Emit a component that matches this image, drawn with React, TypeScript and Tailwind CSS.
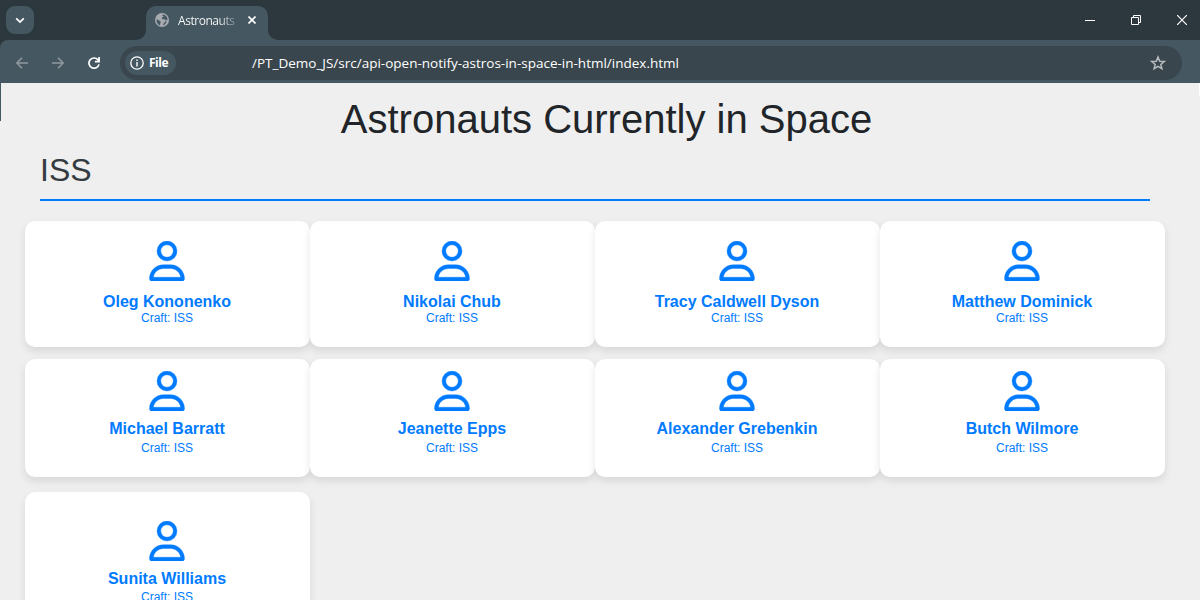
import { FaRegUser } from "react-icons/fa6";

const rows = [
  {
    names: ["Oleg Kononenko", "Nikolai Chub", "Tracy Caldwell Dyson", "Matthew Dominick"],
    row: "h-[126px]",
    card: "pt-5",
    name: "mt-[11px]",
    craft: "",
  },
  {
    names: ["Michael Barratt", "Jeanette Epps", "Alexander Grebenkin", "Butch Wilmore"],
    row: "mt-3 h-[118px]",
    card: "pt-3",
    name: "mt-[8px]",
    craft: "mt-[3px]",
  },
  {
    names: ["Sunita Williams"],
    row: "mt-[15px] h-[126px]",
    card: "pt-[29px]",
    name: "mt-[8px]",
    craft: "mt-[2px]",
  },
];

function TitleBar() {
  return (
    <div className="flex h-10 shrink-0 items-start bg-[#2d383e] text-white">
      <div className="ml-1.5 mt-1.5 flex h-7 w-7 items-center justify-center rounded-[9px] bg-[#455760]">
        <svg width="10" height="7" viewBox="0 0 10 7" fill="none" stroke="#fff" strokeWidth="1.8">
          <path d="M1.2 1.4 5 5.1 8.8 1.4" />
        </svg>
      </div>
      <div className="ml-[102px] mt-1.5 flex">
        <svg className="self-end" width="10" height="10" viewBox="0 0 10 10" fill="#455760">
          <path d="M10 0v10H0A10 10 0 0 0 10 0Z" />
        </svg>
        <div className="flex h-[34px] w-[122px] items-start rounded-t-[10px] bg-[#455760] pl-[9px] pt-[7px]">
          <svg width="14" height="14" viewBox="0 0 14 14">
            <circle cx="7" cy="7" r="7" fill="#a5abaf" />
            <path
              d="M1.6 6.1 5 8.1q1.5 1 .4 1.9l-.6 2.4C2.8 11.6 1.3 9.6 1.6 6.1ZM7.6 1.6c2.9.2 4.8 2.2 4.9 5.1l-1.5.8-1.4-1.2H7.5l-.9-1.1 1.1-1.1L9 3.4 7.2 2.6ZM8.3 12.3l.2-1.7 1.2-.9.1-1.2 1.8-.3c-.4 2-1.6 3.5-3.3 4.1Z"
              fill="#455760"
            />
          </svg>
          <div className="ml-[9px] w-[57px] whitespace-nowrap bg-gradient-to-r from-white from-70% to-white/30 bg-clip-text font-['Open_Sans','Noto_Sans',sans-serif] text-[12px] leading-[16px] tracking-[-0.45px] text-transparent">
            Astronauts
          </div>
          <svg className="ml-[13px] mt-[3px]" width="8" height="8" viewBox="0 0 8 8" stroke="#fff" strokeWidth="1.6">
            <path d="m.5.5 7 7m0-7-7 7" />
          </svg>
        </div>
        <svg className="self-end" width="10" height="10" viewBox="0 0 10 10" fill="#455760">
          <path d="M0 0v10h10A10 10 0 0 1 0 0Z" />
        </svg>
      </div>
      <div className="ml-auto mr-[13px] mt-[15px] flex items-start">
        <svg width="10" height="10" viewBox="0 0 10 10">
          <path d="M0 5.5h10" stroke="#fff" />
        </svg>
        <svg className="ml-9" width="10" height="10" viewBox="0 0 10 10" fill="none" stroke="#fff">
          <path d="M.5 2.5h7v7h-7ZM2.5 2.5v-2h7v7h-2" />
        </svg>
        <svg className="ml-9" width="10" height="10" viewBox="0 0 10 10" stroke="#fff" strokeWidth="1.2">
          <path d="m0 0 10 10M10 0 0 10" />
        </svg>
      </div>
    </div>
  );
}

function Toolbar() {
  return (
    <div className="h-[43px] shrink-0 bg-[#2d383e]">
      <div className="flex h-full items-center rounded-tl-lg bg-[#455760] pl-4 pr-[18px] pb-px pt-1">
        <svg width="12" height="12" viewBox="0 0 12 12" fill="none" stroke="#8e989d" strokeWidth="1.6">
          <path d="M6 .7.9 6 6 11.3M1 6h11" />
        </svg>
        <svg className="ml-6" width="12" height="12" viewBox="0 0 12 12" fill="none" stroke="#8e989d" strokeWidth="1.6">
          <path d="M6 .7 11.1 6 6 11.3M11 6H0" />
        </svg>
        <svg className="ml-6" width="12" height="12" viewBox="0 0 12 12" fill="none" stroke="#fff" strokeWidth="1.7">
          <path d="M11 7.4A5.1 5.1 0 1 1 9.8 2.6L11 3.9M11.1 0v4.6H6.9" />
        </svg>
        <div className="ml-5 flex h-[34px] flex-1 items-center rounded-full bg-[#3a464d] pl-[5px] pr-4 font-['Open_Sans','Noto_Sans',sans-serif] text-white">
          <div className="flex h-6 w-[51px] items-center rounded-full bg-[#455760] pl-[5px]">
            <svg width="14" height="14" viewBox="0 0 14 14" fill="none" stroke="#fff">
              <circle cx="7" cy="7" r="6.2" strokeWidth="1.3" />
              <path d="M7 6v4.5M7 3.5V5" strokeWidth="1.4" />
            </svg>
            <span className="ml-[5px] text-[12px] font-bold leading-4 tracking-[-0.5px]">File</span>
          </div>
          <div className="ml-[76px] whitespace-nowrap text-[13.5px] leading-5">
            /PT_Demo_JS/src/api-open-notify-astros-in-space-in-html/index.html
          </div>
          <svg className="ml-auto" width="16" height="16" viewBox="0 0 16 16" fill="none" stroke="#b5bbbe" strokeWidth="1.5">
            <path d="m8 2 1.7 4.2 4.5.3-3.4 2.9 1.1 4.3L8 11.3l-3.9 2.4 1.1-4.3-3.4-2.9 4.5-.3Z" />
          </svg>
        </div>
      </div>
    </div>
  );
}

function Card({ name, card, nameClass, craftClass }: { name: string; card: string; nameClass: string; craftClass: string }) {
  return (
    <div
      className={`flex h-full w-[285px] flex-col items-center rounded-[10px] bg-white pr-px text-[#007bff] shadow-[0_4px_8px_rgba(0,0,0,0.1)] ${card}`}
    >
      <FaRegUser className="h-10 w-9 shrink-0 stroke-[5]" />
      <h3 className={`text-[16px] font-bold leading-[19px] ${nameClass}`}>{name}</h3>
      <p className={`text-[12px] leading-[15px] ${craftClass}`}>Craft: ISS</p>
    </div>
  );
}

export default function App() {
  return (
    <div className="flex h-[600px] w-[1200px] flex-col overflow-hidden bg-[#efefef] font-['Liberation_Sans',Arial,sans-serif]">
      <TitleBar />
      <Toolbar />
      <div className="flex min-h-0 flex-1">
        <div className="h-[38px] w-px shrink-0 bg-[#455760]" />
        <main className="min-w-0 flex-1 pl-6">
          <h1 className="mt-3 pr-[11px] text-center text-[40px] leading-[48px] text-[#212529]">
            Astronauts Currently in Space
          </h1>
          <h2 className="ml-[15px] h-[58px] w-[1110px] border-b-2 border-[#007bff] pt-2 text-[32px] leading-[38px] text-[#343a40]">
            ISS
          </h2>
          <div className="mt-5">
            {rows.map((r) => (
              <div key={r.names[0]} className={`flex ${r.row}`}>
                {r.names.map((n) => (
                  <Card key={n} name={n} card={r.card} nameClass={r.name} craftClass={r.craft} />
                ))}
              </div>
            ))}
          </div>
        </main>
        <div className="h-[13px] w-px shrink-0 bg-white" />
      </div>
    </div>
  );
}
